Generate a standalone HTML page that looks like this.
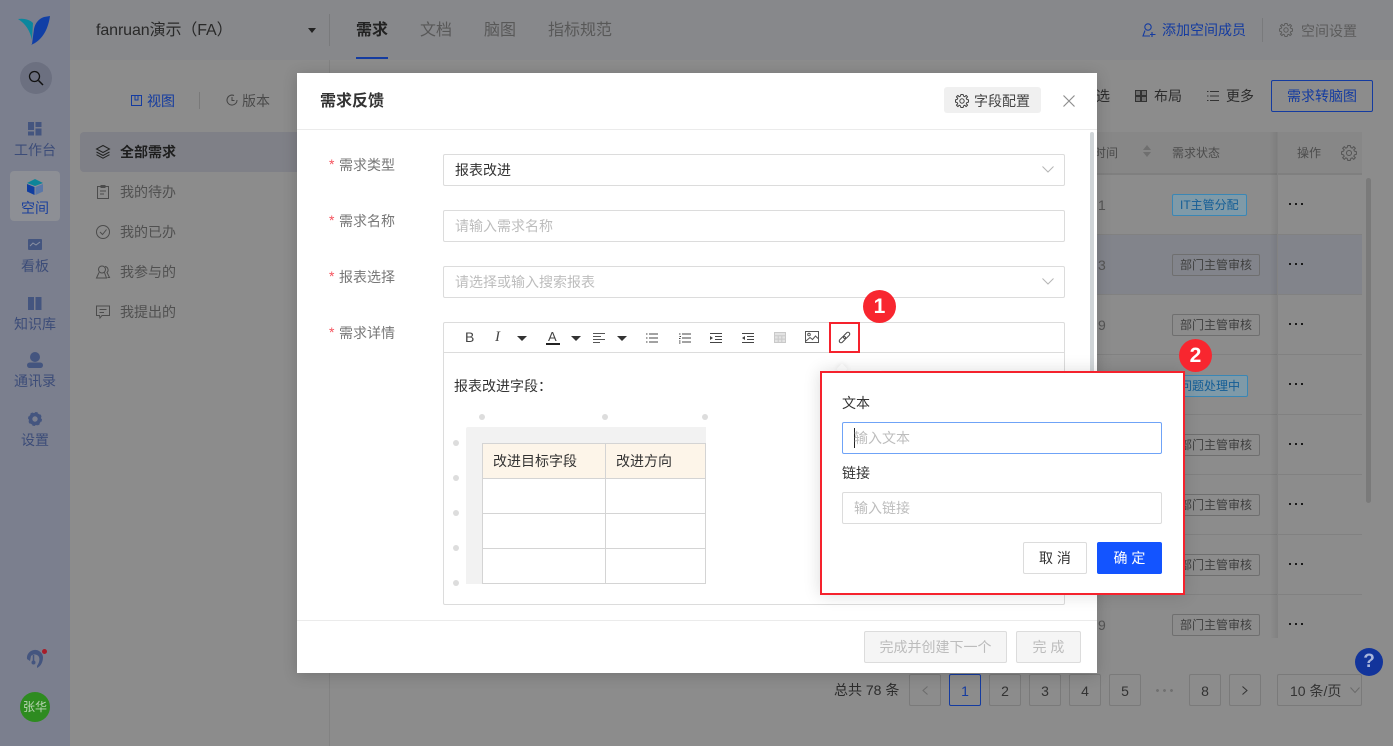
<!DOCTYPE html>
<html><head><meta charset="utf-8"><style>
html,body{margin:0;padding:0}
body{width:1393px;height:746px;position:relative;overflow:hidden;background:#8c8c8c;font-family:"Liberation Sans","Noto Sans CJK SC",sans-serif;font-size:14px;color:#333}
.a,.t{position:absolute}
.t{white-space:nowrap;line-height:20px}
svg{position:absolute;overflow:visible}
.nav{position:absolute;left:0;width:70px;text-align:center;color:#3c4c78;line-height:20px}
.menu{color:#505050;left:120px}
.tag{position:absolute;height:20px;line-height:20px;font-size:12px;border:1px solid #6f6f6f;border-radius:2px;color:#3f3f3f;padding:0 7px;left:1172px;white-space:nowrap}
.tag.b{border-color:#3a87b5;color:#135d96;background:#7f9aa8}
.dots{position:absolute;left:1289px;width:14px;height:2px;background:radial-gradient(circle at 1px 1px,#111 1px,transparent 1.2px) 0 0/6px 2px}
.rl{position:absolute;left:1097px;width:265px;height:1px;background:#818181}
.pg{position:absolute;top:674px;width:30px;height:30px;border:1px solid #7a7a7a;border-radius:2px;text-align:center;line-height:32px;color:#333;font-size:14px;background:#8c8c8c}
.inp{position:absolute;border:1px solid #dcdcdc;border-radius:2px;box-sizing:border-box;background:#fff}
.lb{color:#777;left:339px}
.st{position:absolute;left:329px;color:#f5525d;font-size:14px;line-height:14px}
.ph{color:#bdbdbd}
.dot{position:absolute;width:6px;height:6px;border-radius:50%;background:#ddd}
.c{position:absolute;border:1px solid #d4d4d4;box-sizing:border-box;background:#fff}
</style></head><body>

<!-- sidebar -->
<div class="a" style="left:0;top:0;width:70px;height:746px;background:#7b7f8e"></div>
<svg style="left:17px;top:15px" width="34" height="31" viewBox="0 0 34 31"><path d="M1 4 C8 3 13 5 16 8 L15 25 C13 16 9 9 1 4Z" fill="#0b879e"/><path d="M33 1 L27 2 C21 4 18 9 17 14 L15 29 L14 30 C24 26 31 16 33 1Z" fill="#103fa6"/></svg>
<div class="a" style="left:20px;top:62px;width:32px;height:32px;border-radius:50%;background:#6c7080"></div>
<svg style="left:28px;top:70px" width="16" height="16" viewBox="0 0 16 16"><circle cx="6.5" cy="6.5" r="5" fill="none" stroke="#111" stroke-width="1.3"/><path d="M10.5 10.5L15 15" stroke="#111" stroke-width="1.5"/></svg>

<svg style="left:28px;top:122px" width="14" height="14" viewBox="0 0 14 14" fill="#44557f"><rect width="6" height="8"/><rect x="7.5" width="6" height="5"/><rect y="9.5" width="6" height="4"/><rect x="7.5" y="6.5" width="6" height="7"/></svg>
<div class="nav" style="top:140px">工作台</div>
<div class="a" style="left:10px;top:171px;width:50px;height:50px;border-radius:4px;background:#8d8f95"></div>
<svg style="left:27px;top:179px" width="16" height="16" viewBox="0 0 16 16"><path d="M8 0L16 4L8 7L0 4Z" fill="#0d8499"/><path d="M0 5L7.5 8V16L0 12.5Z" fill="#103da0"/><path d="M16 5L8.5 8V16L16 12.5Z" fill="#5a77a8"/></svg>
<div class="nav" style="top:198px;color:#1a3f9c">空间</div>
<svg style="left:28px;top:238px" width="14" height="14" viewBox="0 0 14 14"><path d="M0 2Q0 1 1 1H13Q14 1 14 2V11Q14 12 13 12H1Q0 12 0 11Z" fill="#44557f"/><path d="M2 8L5 5L8 7L12 4" stroke="#8a90a2" fill="none"/></svg>
<div class="nav" style="top:256px">看板</div>
<svg style="left:28px;top:297px" width="14" height="13" viewBox="0 0 14 13" fill="#44557f"><path d="M0 0H6V13H0Z"/><path d="M7.5 0H13.5V13H7.5Z"/></svg>
<div class="nav" style="top:314px">知识库</div>
<svg style="left:27px;top:352px" width="16" height="16" viewBox="0 0 16 16" fill="#44557f"><circle cx="8" cy="5" r="5"/><rect y="10.5" width="16" height="5.5" rx="2.7"/></svg>
<div class="nav" style="top:371px">通讯录</div>
<svg style="left:28px;top:412px" width="14" height="14" viewBox="0 0 14 14"><circle cx="7" cy="7" r="4.5" fill="none" stroke="#44557f" stroke-width="3.6"/><circle cx="7" cy="7" r="6" fill="none" stroke="#44557f" stroke-width="2" stroke-dasharray="2.5 2.2"/></svg>
<div class="nav" style="top:430px">设置</div>
<svg style="left:26px;top:650px" width="20" height="20" viewBox="0 0 20 20"><path d="M1 9A8 8 0 0 1 17 7C17 12 15 16 11 18L11 16C13 13 14 10 13 7A5 5 0 0 0 5 6L4 11Z" fill="#44557f"/><path d="M7.500 5V12" stroke="#44557f" stroke-width="1.500"/><circle cx="7.500" cy="12.500" r="2" fill="#44557f"/></svg>
<div class="a" style="left:42px;top:649px;width:5px;height:5px;border-radius:50%;background:#a81d2a"></div>
<div class="a" style="left:20px;top:692px;width:30px;height:30px;border-radius:50%;background:#2e8b20;color:#b9d4b4;font-size:12px;line-height:30px;text-align:center">张华</div>

<!-- top header -->
<div class="a" style="left:70px;top:0;width:1323px;height:60px;background:#87888b"></div>
<div class="t" style="left:96px;top:21px;font-size:16px;color:#292929;letter-spacing:-.1px">fanruan演示（FA）</div>
<div class="a" style="left:308px;top:28px;border:4px solid transparent;border-top:5px solid #222;border-bottom:0"></div>
<div class="a" style="left:329px;top:14px;width:1px;height:32px;background:#797a7c"></div>
<div class="t" style="left:356px;top:21px;font-size:16px;font-weight:700;color:#222">需求</div>
<div class="a" style="left:356px;top:57px;width:32px;height:2px;background:#143ba0"></div>
<div class="t" style="left:420px;top:21px;font-size:16px;color:#585858">文档</div>
<div class="t" style="left:484px;top:21px;font-size:16px;color:#585858">脑图</div>
<div class="t" style="left:548px;top:21px;font-size:16px;color:#585858">指标规范</div>
<svg style="left:1142px;top:23px" width="15" height="15" viewBox="0 0 15 15" fill="none" stroke="#143ba0" stroke-width="1.100"><circle cx="6" cy="4" r="3.200"/><path d="M3 7.500L1 13H8M10 9V14M8 11.500H13.500"/></svg>
<div class="t" style="left:1162px;top:20px;color:#143ba0">添加空间成员</div>
<div class="a" style="left:1262px;top:18px;width:1px;height:24px;background:#797a7c"></div>
<svg style="left:1279px;top:23px" width="14" height="14" viewBox="0 0 14 14" fill="none" stroke="#5c5c5c" stroke-linejoin="round"><path d="M5.900 .5H8.100L8.600 2.200L9.800 2.800L11.100 1.400L12.600 2.900L11.200 4.200L11.800 5.400L13.500 5.900V8.100L11.800 8.600L11.200 9.800L12.600 11.100L11.100 12.600L9.800 11.200L8.600 11.800L8.100 13.500H5.900L5.400 11.800L4.200 11.200L2.900 12.600L1.400 11.100L2.800 9.800L2.200 8.600L.5 8.100V5.900L2.200 5.400L2.800 4.200L1.400 2.900L2.900 1.400L4.200 2.800L5.400 2.200Z"/><circle cx="7" cy="7" r="2.200"/></svg>
<div class="t" style="left:1301px;top:21px;color:#5c5c5c">空间设置</div>

<!-- left panel -->
<div class="a" style="left:329px;top:60px;width:1px;height:686px;background:#828282"></div>
<svg style="left:131px;top:95px" width="12" height="12" viewBox="0 0 12 12" fill="none" stroke="#143ba0"><path d="M.5.5H10.500V10.500H.5ZM4 .5V5H7V.5"/></svg>
<div class="t" style="left:147px;top:91px;color:#143ba0">视图</div>
<div class="a" style="left:199px;top:92px;width:1px;height:17px;background:#797979"></div>
<svg style="left:226px;top:94px" width="12" height="12" viewBox="0 0 12 12" fill="none" stroke="#444"><path d="M11 6A5 5 0 1 1 8 1.500M6 3V6.500H8.500"/></svg>
<div class="t" style="left:242px;top:91px;color:#4a4a4a">版本</div>
<div class="a" style="left:80px;top:132px;width:240px;height:40px;border-radius:4px;background:#7f8087"></div>
<svg style="left:96px;top:145px" width="14" height="14" viewBox="0 0 14 14" fill="none" stroke="#222"><path d="M7 .5L13.500 4L7 7.500L.5 4ZM.5 7L7 10.500L13.500 7M.5 9.700L7 13.200L13.500 9.700"/></svg>
<div class="t" style="left:120px;top:142px;font-weight:700;color:#1e1e1e">全部需求</div>
<svg style="left:97px;top:185px" width="12" height="14" viewBox="0 0 12 14" fill="none" stroke="#4c4c4c"><path d="M.5 1.500H11.500V13.500H.5ZM4 .5H8V2.500H4ZM3 6H9M3 9H7"/></svg>
<div class="t menu" style="top:182px">我的待办</div>
<svg style="left:96px;top:225px" width="14" height="14" viewBox="0 0 14 14" fill="none" stroke="#4c4c4c"><circle cx="7" cy="7" r="6.500"/><path d="M4 7L6.500 9.500L10.500 4.500"/></svg>
<div class="t menu" style="top:222px">我的已办</div>
<svg style="left:96px;top:265px" width="14" height="14" viewBox="0 0 14 14" fill="none" stroke="#4c4c4c"><circle cx="6" cy="4.500" r="3.500"/><path d="M3 7.500L.5 13H10.500L8.500 7.500M9 1.500A3.500 3.500 0 0 1 11 7.500L13.500 12.500H11.500"/></svg>
<div class="t menu" style="top:262px">我参与的</div>
<svg style="left:96px;top:305px" width="14" height="14" viewBox="0 0 14 14" fill="none" stroke="#4c4c4c"><path d="M.5 1H13.500V10.500H6L4 13L3.500 10.500H.5ZM3.500 4.500H10.500M3.500 7.500H8"/></svg>
<div class="t menu" style="top:302px">我提出的</div>

<!-- right toolbar -->
<div class="t" style="left:1096px;top:86px;color:#2c2c2c">选</div>
<svg style="left:1135px;top:90px" width="12" height="12" viewBox="0 0 12 12" fill="#6d6d6d" stroke="#333"><path d="M.5.5H5.500V5.500H.5ZM6.500.5H11.500V5.500H6.500ZM.5 6.500H5.500V11.500H.5ZM6.500 6.500H11.500V11.500H6.500Z"/></svg>
<div class="t" style="left:1154px;top:86px;color:#2c2c2c">布局</div>
<svg style="left:1207px;top:90px" width="12" height="12" viewBox="0 0 12 12" fill="none" stroke="#333"><path d="M3 1.500H12M3 6H12M3 10.500H12M0 1.500H1.500M0 6H1.500M0 10.500H1.500"/></svg>
<div class="t" style="left:1226px;top:86px;color:#2c2c2c">更多</div>
<div class="a" style="left:1271px;top:80px;width:100px;height:30px;border:1px solid #143ba0;border-radius:2px;color:#143ba0;text-align:center;line-height:30px">需求转脑图</div>

<!-- table -->
<div class="a" style="left:1097px;top:132px;width:265px;height:41px;background:#878787"></div>
<div class="a" style="left:1097px;top:173px;width:265px;height:2px;background:#7f7f7f"></div>
<div class="t" style="left:1094px;top:143px;font-size:12px;color:#4c4c4c">时间</div>
<div class="a" style="left:1143px;top:145px;border:4px solid transparent;border-bottom:5px solid #6f6f6f;border-top:0"></div>
<div class="a" style="left:1143px;top:152px;border:4px solid transparent;border-top:5px solid #6f6f6f;border-bottom:0"></div>
<div class="t" style="left:1172px;top:143px;font-size:12px;color:#4c4c4c">需求状态</div>
<div class="a" style="left:1097px;top:234px;width:265px;height:60px;background:#82848b"></div>
<div class="rl" style="top:234px"></div><div class="rl" style="top:294px"></div><div class="rl" style="top:354px"></div><div class="rl" style="top:414px"></div><div class="rl" style="top:474px"></div><div class="rl" style="top:534px"></div><div class="rl" style="top:594px"></div>
<div class="a" style="left:1270px;top:132px;width:7px;height:506px;background:linear-gradient(90deg,transparent,rgba(0,0,0,.07))"></div>
<div class="a" style="left:1277px;top:132px;width:1px;height:506px;background:#828282"></div>
<div class="t" style="left:1297px;top:143px;font-size:12px;color:#4c4c4c">操作</div>
<svg style="left:1341px;top:145px" width="16" height="16" viewBox="0 0 14 14" fill="none" stroke="#555" stroke-width=".9" stroke-linejoin="round"><path d="M5.900 .5H8.100L8.600 2.200L9.800 2.800L11.100 1.400L12.600 2.900L11.200 4.200L11.800 5.400L13.500 5.900V8.100L11.800 8.600L11.200 9.800L12.600 11.100L11.100 12.600L9.800 11.200L8.600 11.800L8.100 13.500H5.900L5.400 11.800L4.200 11.200L2.900 12.600L1.400 11.100L2.800 9.800L2.200 8.600L.5 8.100V5.900L2.200 5.400L2.800 4.200L1.400 2.900L2.900 1.400L4.200 2.800L5.400 2.200Z"/><circle cx="7" cy="7" r="2.200"/></svg>
<div class="a" style="left:1366px;top:178px;width:5px;height:325px;border-radius:3px;background:#7a7a7a"></div>
<div class="t" style="left:1098px;top:195px;color:#555">1</div>
<div class="t" style="left:1098px;top:255px;color:#555">3</div>
<div class="t" style="left:1098px;top:315px;color:#555">9</div>
<div class="t" style="left:1098px;top:615px;color:#555">9</div>
<div class="tag b" style="top:194px">IT主管分配</div>
<div class="tag" style="top:254px">部门主管审核</div>
<div class="tag" style="top:314px">部门主管审核</div>
<div class="tag b" style="top:375px">问题处理中</div>
<div class="tag" style="top:434px">部门主管审核</div>
<div class="tag" style="top:494px">部门主管审核</div>
<div class="tag" style="top:554px">部门主管审核</div>
<div class="tag" style="top:614px">部门主管审核</div>
<div class="dots" style="top:203px"></div><div class="dots" style="top:263px"></div><div class="dots" style="top:323px"></div><div class="dots" style="top:383px"></div><div class="dots" style="top:443px"></div><div class="dots" style="top:503px"></div><div class="dots" style="top:563px"></div><div class="dots" style="top:623px"></div>

<!-- pagination -->
<div class="t" style="left:834px;top:680px;color:#2c2c2c">总共 78 条</div>
<div class="pg" style="left:909px"></div>
<svg style="left:922px;top:686px" width="6" height="9" viewBox="0 0 6 9" fill="none" stroke="#6c6c6c"><path d="M5.500.5L1 4.500L5.500 8.500"/></svg>
<div class="pg" style="left:949px;border-color:#143ba0;color:#143ba0">1</div>
<div class="pg" style="left:989px">2</div>
<div class="pg" style="left:1029px">3</div>
<div class="pg" style="left:1069px">4</div>
<div class="pg" style="left:1109px">5</div>
<div class="a" style="left:1156px;top:689px;width:18px;height:3px;background:radial-gradient(circle at 1.500px 1.500px,#717171 1.300px,transparent 1.600px) 0 0/7px 3px"></div>
<div class="pg" style="left:1189px">8</div>
<div class="pg" style="left:1229px"></div>
<svg style="left:1242px;top:686px" width="6" height="9" viewBox="0 0 6 9" fill="none" stroke="#333"><path d="M.5.5L5 4.500L.5 8.500"/></svg>
<div class="pg" style="left:1277px;width:83px;text-align:left;text-indent:12px">10 条/页</div>
<svg style="left:1350px;top:687px" width="10" height="6" viewBox="0 0 10 6" fill="none" stroke="#6a6a6a"><path d="M.5.5L5 5.500L9.500.5"/></svg>
<div class="a" style="left:1355px;top:648px;width:28px;height:28px;border-radius:50%;background:#12349b;color:#a9b6dc;font-size:19px;font-weight:700;text-align:center;line-height:28px">?</div>

<!-- modal -->
<div class="a" style="left:297px;top:73px;width:800px;height:600px;background:#fff;box-shadow:0 2px 14px rgba(0,0,0,.18)"></div>
<div class="t" style="left:320px;top:92px;font-size:16px;font-weight:700;color:#333">需求反馈</div>
<div class="a" style="left:944px;top:87px;width:97px;height:26px;background:#f0f0f0;border-radius:3px"></div>
<svg style="left:955px;top:94px" width="14" height="14" viewBox="0 0 14 14" fill="none" stroke="#444" stroke-linejoin="round"><path d="M5.900 .5H8.100L8.600 2.200L9.800 2.800L11.100 1.400L12.600 2.900L11.200 4.200L11.800 5.400L13.500 5.900V8.100L11.800 8.600L11.200 9.800L12.600 11.100L11.100 12.600L9.800 11.200L8.600 11.800L8.100 13.500H5.900L5.400 11.800L4.200 11.200L2.900 12.600L1.400 11.100L2.800 9.800L2.200 8.600L.5 8.100V5.900L2.200 5.400L2.800 4.200L1.400 2.900L2.900 1.400L4.200 2.800L5.400 2.200Z"/><circle cx="7" cy="7" r="2.200"/></svg>
<div class="t" style="left:974px;top:91px;color:#444">字段配置</div>
<svg style="left:1063px;top:95px" width="12" height="12" viewBox="0 0 12 12" stroke="#8f8f8f" stroke-width="1.200"><path d="M.5.5L11.500 11.500M11.500.5L.5 11.500"/></svg>
<div class="a" style="left:297px;top:129px;width:800px;height:1px;background:#ebebeb"></div>
<div class="a" style="left:1090px;top:132px;width:4px;height:443px;border-radius:2px;background:#d0d5d8"></div>

<div class="st" style="top:157px">*</div><div class="t lb" style="top:155px">需求类型</div>
<div class="st" style="top:213px">*</div><div class="t lb" style="top:211px">需求名称</div>
<div class="st" style="top:269px">*</div><div class="t lb" style="top:267px">报表选择</div>
<div class="st" style="top:325px">*</div><div class="t lb" style="top:323px">需求详情</div>

<div class="inp" style="left:443px;top:154px;width:622px;height:32px"></div>
<div class="t" style="left:455px;top:160px;color:#333">报表改进</div>
<svg style="left:1042px;top:166px" width="12" height="7" viewBox="0 0 12 7" fill="none" stroke="#b5b5b5"><path d="M.5.5L6 6L11.500.5"/></svg>
<div class="inp" style="left:443px;top:210px;width:622px;height:32px"></div>
<div class="t ph" style="left:455px;top:216px">请输入需求名称</div>
<div class="inp" style="left:443px;top:266px;width:622px;height:32px"></div>
<div class="t ph" style="left:455px;top:272px">请选择或输入搜索报表</div>
<svg style="left:1042px;top:278px" width="12" height="7" viewBox="0 0 12 7" fill="none" stroke="#b5b5b5"><path d="M.5.5L6 6L11.500.5"/></svg>

<!-- editor -->
<div class="inp" style="left:443px;top:322px;width:622px;height:283px"></div>
<div class="a" style="left:444px;top:352px;width:620px;height:1px;background:#dcdcdc"></div>
<div class="t" style="left:465px;top:327px;font-size:14px;color:#444">B</div>
<div class="t" style="left:495px;top:327px;font-family:'Liberation Serif',serif;font-style:italic;font-size:15px;color:#444">I</div>
<div class="a" style="left:517px;top:336px;border:5px solid transparent;border-top:5px solid #333;border-bottom:0"></div>
<div class="t" style="left:548px;top:327px;font-size:13px;color:#444">A</div>
<div class="a" style="left:546px;top:343px;width:14px;height:2px;background:#222"></div>
<div class="a" style="left:571px;top:336px;border:5px solid transparent;border-top:5px solid #333;border-bottom:0"></div>
<svg style="left:593px;top:333px" width="12" height="10" viewBox="0 0 12 10" stroke="#555"><path d="M0 .5H12M0 3.500H8M0 6.500H12M0 9.500H7"/></svg>
<div class="a" style="left:617px;top:336px;border:5px solid transparent;border-top:5px solid #333;border-bottom:0"></div>
<svg style="left:646px;top:333px" width="12" height="10" viewBox="0 0 12 10" stroke="#444"><path d="M3 1H12M3 5H12M3 9H12M0 1H1.500M0 5H1.500M0 9H1.500"/></svg>
<svg style="left:679px;top:333px" width="12" height="10" viewBox="0 0 12 10" stroke="#444"><path d="M3 1H12M3 5H12M3 9H12M0 1H1.500M.5 3.500H2M0 5.500H1.500M0 8H1.500M0 10H1.500"/></svg>
<svg style="left:710px;top:333px" width="12" height="10" viewBox="0 0 12 10" stroke="#444"><path d="M0 .5H12M5 3.500H12M5 6.500H12M0 9.500H12"/><path d="M0 3L3 5L0 7Z" fill="#444" stroke="none"/></svg>
<svg style="left:742px;top:333px" width="12" height="10" viewBox="0 0 12 10" stroke="#444"><path d="M0 .5H12M5 3.500H12M5 6.500H12M0 9.500H12"/><path d="M3 3L0 5L3 7Z" fill="#444" stroke="none"/></svg>
<svg style="left:774px;top:332px" width="12" height="11" viewBox="0 0 12 11" fill="#e3e3e3" stroke="#c9c9c9"><path d="M.5.5H11.500V10.500H.5ZM.5 3.800H11.500M.5 7.100H11.500M4.200 3.800V10.500M7.800 3.800V10.500"/></svg>
<svg style="left:805px;top:331px" width="14" height="12" viewBox="0 0 14 12" fill="none" stroke="#555"><path d="M.5.5H13.500V11.500H.5Z"/><circle cx="4" cy="3.500" r="1.300"/><path d="M1 10L5 6.500L7.500 8.500L10.500 5L13 7.500"/></svg>
<svg style="left:838px;top:331px" width="13" height="13" viewBox="0 0 13 13" fill="none" stroke="#444" stroke-width="1"><rect x="-.2" y="4.700" width="7.600" height="3.600" rx="1.800" transform="rotate(-45 6.500 6.500)"/><rect x="5.600" y="4.700" width="7.600" height="3.600" rx="1.800" transform="rotate(-45 6.500 6.500)"/></svg>
<div class="a" style="left:829px;top:322px;width:31px;height:31px;box-sizing:border-box;border:2px solid #f5222d"></div>
<div class="a" style="left:863px;top:290px;width:33px;height:33px;border-radius:50%;background:#f8262f;color:#fff;font-size:21px;font-weight:700;text-align:center;line-height:33px">1</div>

<div class="t" style="left:454px;top:376px;color:#333">报表改进字段：</div>
<div class="dot" style="left:479px;top:414px"></div><div class="dot" style="left:602px;top:414px"></div><div class="dot" style="left:702px;top:414px"></div>
<div class="dot" style="left:453px;top:440px"></div><div class="dot" style="left:453px;top:475px"></div><div class="dot" style="left:453px;top:510px"></div><div class="dot" style="left:453px;top:545px"></div><div class="dot" style="left:453px;top:580px"></div>
<div class="a" style="left:466px;top:427px;width:240px;height:157px;background:#f2f2f2;border-radius:2px 0 0 0"></div>
<div class="c" style="left:482px;top:443px;width:124px;height:36px;background:#fdf5e9"></div>
<div class="c" style="left:605px;top:443px;width:101px;height:36px;background:#fdf5e9"></div>
<div class="c" style="left:482px;top:478px;width:124px;height:36px"></div><div class="c" style="left:605px;top:478px;width:101px;height:36px"></div>
<div class="c" style="left:482px;top:513px;width:124px;height:36px"></div><div class="c" style="left:605px;top:513px;width:101px;height:36px"></div>
<div class="c" style="left:482px;top:548px;width:124px;height:36px"></div><div class="c" style="left:605px;top:548px;width:101px;height:36px"></div>
<div class="t" style="left:493px;top:451px;color:#333">改进目标字段</div>
<div class="t" style="left:616px;top:451px;color:#333">改进方向</div>

<!-- modal footer -->
<div class="a" style="left:297px;top:620px;width:800px;height:1px;background:#ebebeb"></div>
<div class="a" style="left:864px;top:631px;width:143px;height:32px;box-sizing:border-box;border:1px solid #dcdcdc;border-radius:2px;background:#f5f5f5;color:#bcbcbc;text-align:center;line-height:30px">完成并创建下一个</div>
<div class="a" style="left:1016px;top:631px;width:65px;height:32px;box-sizing:border-box;border:1px solid #dcdcdc;border-radius:2px;background:#f5f5f5;color:#bcbcbc;text-align:center;line-height:30px">完 成</div>

<!-- link popup -->
<div class="a" style="left:838px;top:365px;width:8px;height:8px;background:#fff;transform:rotate(45deg);box-shadow:0 0 6px rgba(0,0,0,.1)"></div>
<div class="a" style="left:820px;top:371px;width:365px;height:224px;box-sizing:border-box;background:#fff;border:2px solid #f5222d;box-shadow:0 0 16px rgba(0,0,0,.14)"></div>
<div class="t" style="left:842px;top:393px;color:#333">文本</div>
<div class="inp" style="left:842px;top:422px;width:320px;height:32px;border-color:#6fa3f7"></div>
<div class="a" style="left:854px;top:428px;width:1px;height:20px;background:#222"></div>
<div class="t ph" style="left:854px;top:428px">输入文本</div>
<div class="t" style="left:842px;top:463px;color:#333">链接</div>
<div class="inp" style="left:842px;top:492px;width:320px;height:32px"></div>
<div class="t ph" style="left:854px;top:498px">输入链接</div>
<div class="a" style="left:1023px;top:542px;width:64px;height:32px;box-sizing:border-box;border:1px solid #dcdcdc;border-radius:2px;background:#fff;color:#333;text-align:center;line-height:30px">取 消</div>
<div class="a" style="left:1097px;top:542px;width:65px;height:32px;border-radius:2px;background:#1354ff;color:#fff;text-align:center;line-height:32px">确 定</div>
<div class="a" style="left:1179px;top:339px;width:33px;height:33px;border-radius:50%;background:#f8262f;color:#fff;font-size:21px;font-weight:700;text-align:center;line-height:33px">2</div>

</body></html>
